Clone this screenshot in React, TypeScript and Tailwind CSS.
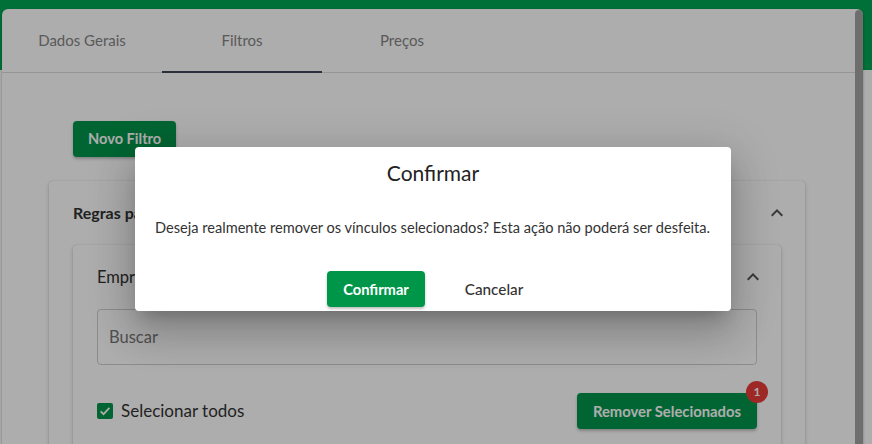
import React from "react";

const font = { fontFamily: "Lato, 'Open Sans', sans-serif" };

function ExpandLess() {
  return (
    <svg viewBox="0 0 24 24" className="h-6 w-6 fill-[#555]" aria-hidden>
      <path d="M12 8l-6 6 1.41 1.41L12 10.83l4.59 4.58L18 14z" />
    </svg>
  );
}

export default function App() {
  return (
    <div
      style={font}
      className="relative h-[444px] w-[872px] overflow-hidden bg-white text-[#333]"
    >
      <div className="h-[70px] bg-[#00a553]" />

      {/* main card */}
      <div className="-mt-[61px] ml-[2px] flex h-[440px] w-[861px] overflow-hidden rounded-t-[6px] bg-white shadow-[0_1px_3px_rgba(0,0,0,0.3)]">
        <div className="flex-1">
          <div className="flex h-[64px] border-b border-[#dcdcdc]">
            <div className="flex w-[160px] items-center justify-center text-[15px] text-[#858585]">
              Dados Gerais
            </div>
            <div className="relative flex w-[160px] items-center justify-center text-[15px] text-[#858585]">
              Filtros
              <div className="absolute bottom-[-1px] left-0 h-[2px] w-full bg-[#414659]" />
            </div>
            <div className="flex w-[160px] items-center justify-center text-[15px] text-[#858585]">
              Preços
            </div>
          </div>

          <div className="pl-[47px] pr-[50px] pt-[48px]">
            <button className="ml-[24px] h-[36px] rounded-[4px] bg-[#00964a] px-[15px] text-[14.6px] font-bold text-white shadow-[0_2px_3px_rgba(0,0,0,0.25)]">
              Novo Filtro
            </button>

            <div className="mt-[24px] rounded-[4px] bg-white pb-6 shadow-[0_2px_4px_rgba(0,0,0,0.2),0_0_1px_rgba(0,0,0,0.2)]">
              <div className="flex h-[64px] items-center justify-between pl-[24px] pr-[16px]">
                <span className="text-[16px] font-bold text-[#333]">
                  Regras para Filtro
                </span>
                <ExpandLess />
              </div>

              <div className="mx-[24px] rounded-[4px] bg-white pb-6 shadow-[0_2px_4px_rgba(0,0,0,0.2),0_0_1px_rgba(0,0,0,0.2)]">
                <div className="flex h-[64px] items-center justify-between pl-[24px] pr-[16px]">
                  <span className="text-[16.5px] text-[#333]">Empresas</span>
                  <ExpandLess />
                </div>
                <div className="px-[24px]">
                  <div className="flex h-[56px] items-center rounded-[4px] border border-[#cfcfcf] px-[11px] text-[16.5px] text-[#777]">
                    Buscar
                  </div>
                  <div className="mt-[28px] flex h-[36px] items-center justify-between">
                    <label className="flex items-center gap-[8px] text-[17px] text-[#333]">
                      <span className="flex h-[16px] w-[16px] items-center justify-center rounded-[2px] bg-[#00964a]">
                        <svg viewBox="0 0 24 24" className="h-[14px] w-[14px]" fill="none" stroke="white" strokeWidth="3">
                          <path d="M4.5 12.5l5 5 10-11" />
                        </svg>
                      </span>
                      Selecionar todos
                    </label>
                    <div className="relative">
                      <button className="h-[36px] rounded-[4px] bg-[#00964a] px-[16px] text-[14.8px] font-bold text-white shadow-[0_2px_3px_rgba(0,0,0,0.25)]">
                        Remover Selecionados
                      </button>
                      <span className="absolute -right-[11px] -top-[12px] flex h-[22px] w-[22px] items-center justify-center rounded-full bg-[#e83b38] text-[12px] font-bold text-white">
                        1
                      </span>
                    </div>
                  </div>
                </div>
              </div>
            </div>
          </div>
        </div>
        <div className="mt-[1px] w-[8px] rounded-t-[4px] bg-[#a2a2a2]" />
      </div>

      {/* backdrop */}
      <div className="absolute inset-0 bg-black/[0.32]" />

      {/* dialog */}
      <div className="absolute left-[135px] top-[147px] flex h-[164px] w-[596px] flex-col rounded-[4px] bg-white px-[20px] pb-[4px] pt-[14px] shadow-[0_11px_15px_-7px_rgba(0,0,0,0.2),0_24px_38px_3px_rgba(0,0,0,0.14),0_9px_46px_8px_rgba(0,0,0,0.12)]">
        <h2 className="text-center text-[21px] leading-[24px] text-[#222]">Confirmar</h2>
        <p className="mt-[33px] text-[14.6px] leading-[20px] text-[#333]">
          Deseja realmente remover os vínculos selecionados? Esta ação não poderá ser desfeita.
        </p>
        <div className="mt-[33px] flex justify-center gap-[24px]">
          <button className="h-[36px] w-[98px] rounded-[4px] bg-[#00964a] text-[14.7px] font-bold text-white shadow-[0_2px_3px_rgba(0,0,0,0.25)]">
            Confirmar
          </button>
          <button className="h-[36px] w-[90px] text-[15.3px] font-medium text-[#333]">
            Cancelar
          </button>
        </div>
      </div>
    </div>
  );
}
